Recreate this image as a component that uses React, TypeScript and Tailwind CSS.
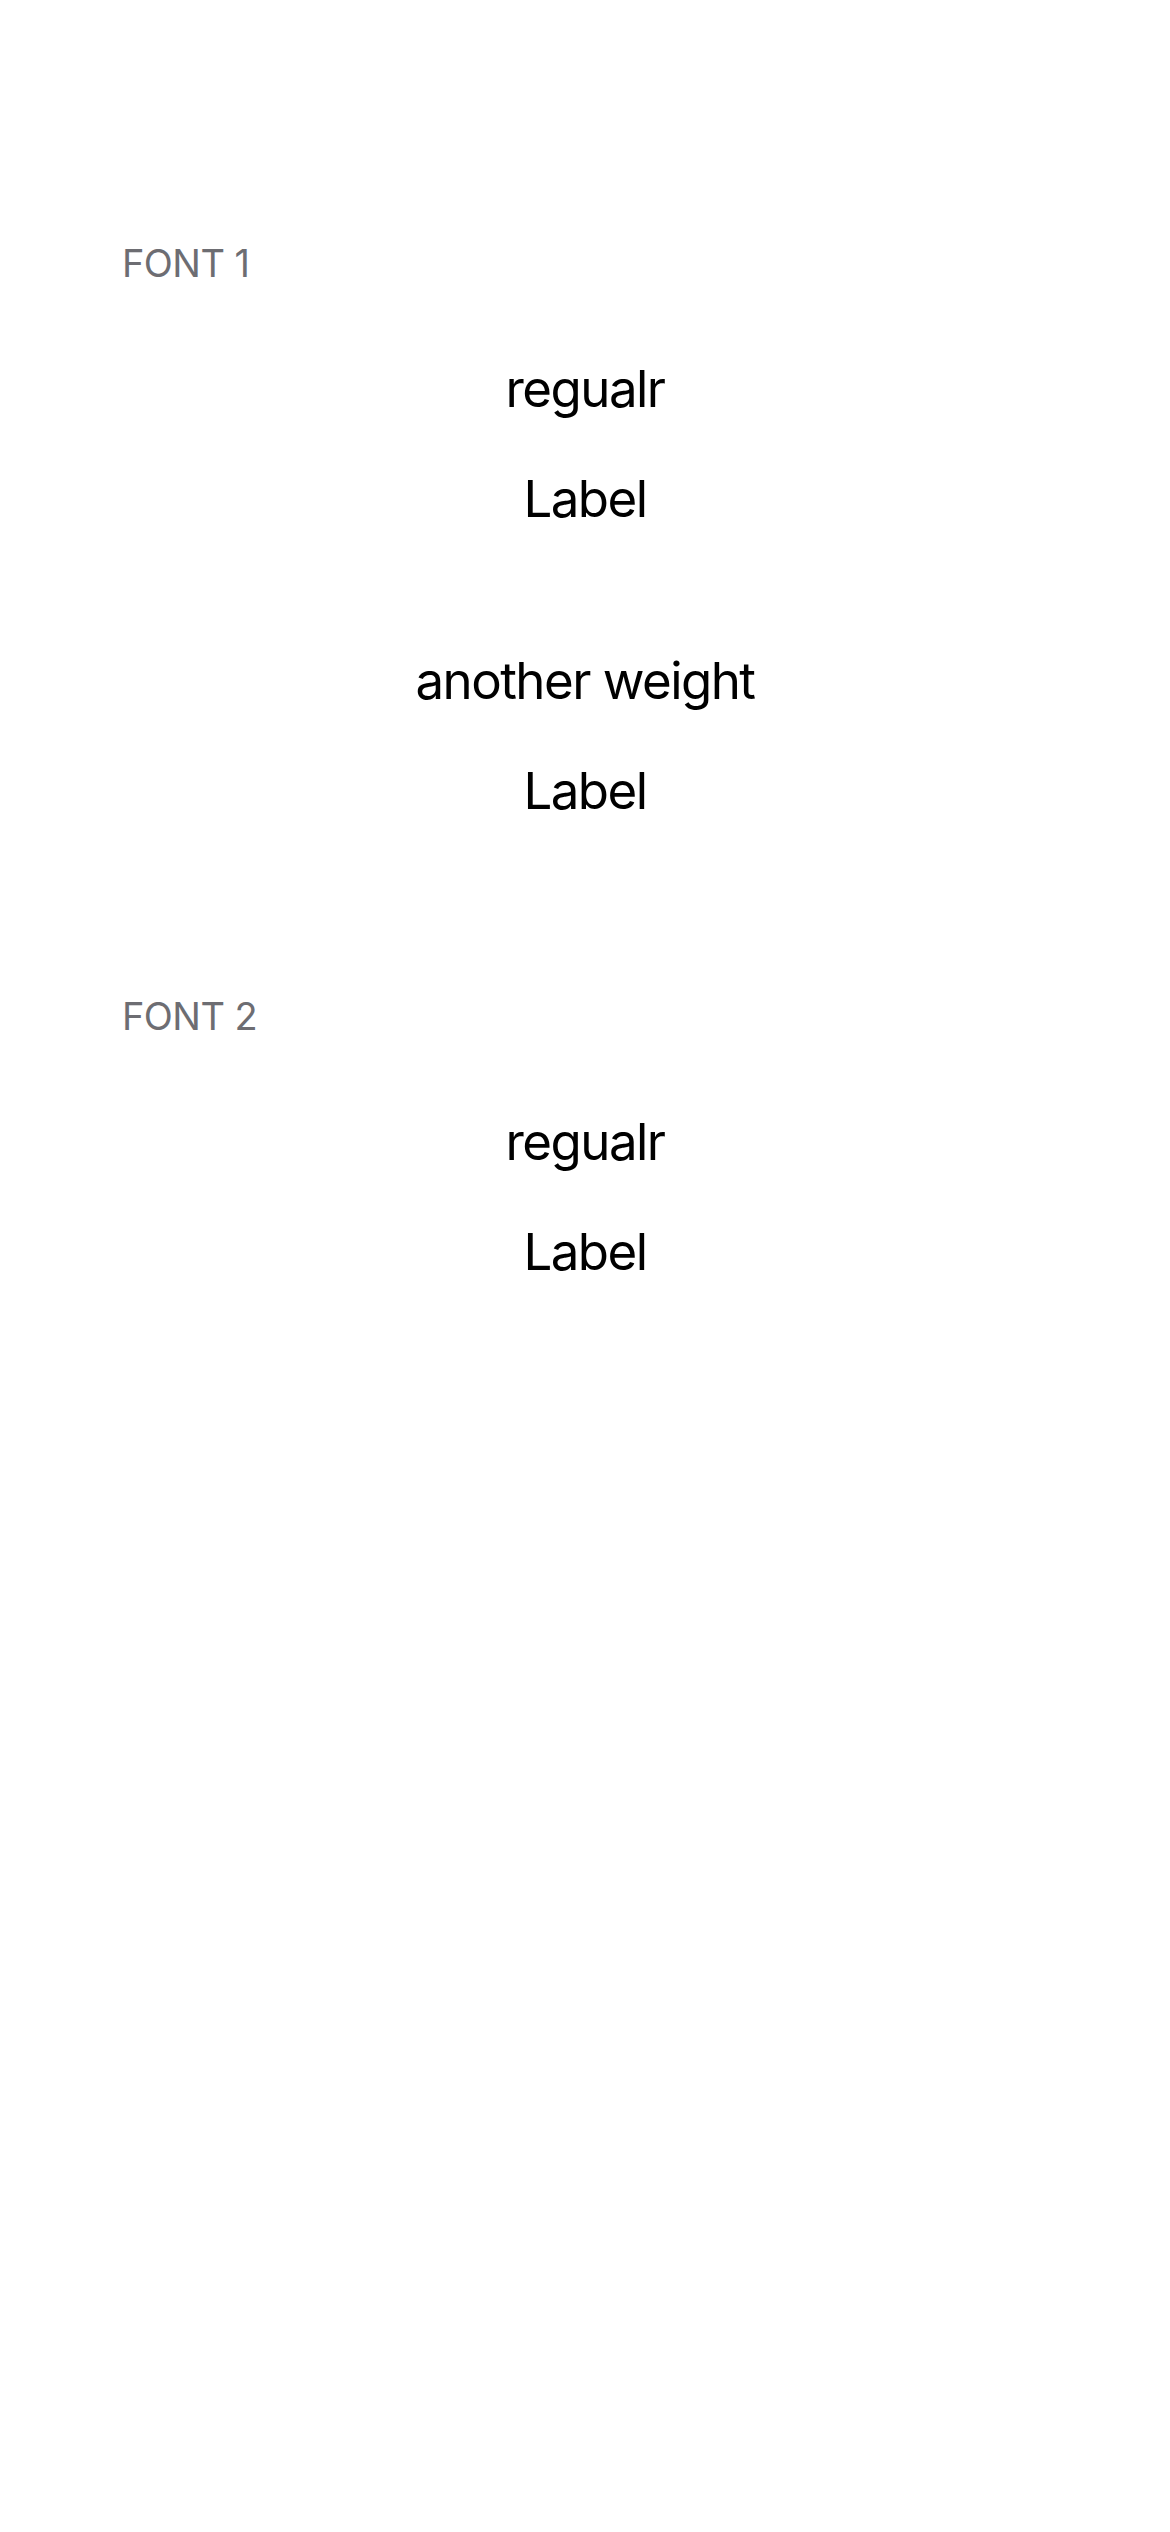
const font = { fontFamily: 'Inter, "Noto Sans", sans-serif' };

function SectionHeader({ title }: { title: string }) {
  return (
    <div className="h-[48px] pl-[122px] text-[38px] leading-[48px] tracking-[-0.015em] uppercase text-[#6d6d72]">
      {title}
    </div>
  );
}

function Row({ text }: { text: string }) {
  return (
    <div className="h-[110px] text-center text-[51px] leading-[110px] tracking-[-0.03em] text-black">
      {text}
    </div>
  );
}

export default function App() {
  return (
    <div className="min-h-[2532px] w-full bg-white pt-[239px]" style={font}>
      <section>
        <SectionHeader title="Font 1" />
        <div className="mt-[47px] flex flex-col gap-[72px]">
          <div>
            <Row text="regualr" />
            <Row text="Label" />
          </div>
          <div>
            <Row text="another weight" />
            <Row text="Label" />
          </div>
        </div>
      </section>
      <section className="mt-[146px]">
        <SectionHeader title="Font 2" />
        <div className="mt-[47px]">
          <Row text="regualr" />
          <Row text="Label" />
        </div>
      </section>
    </div>
  );
}
